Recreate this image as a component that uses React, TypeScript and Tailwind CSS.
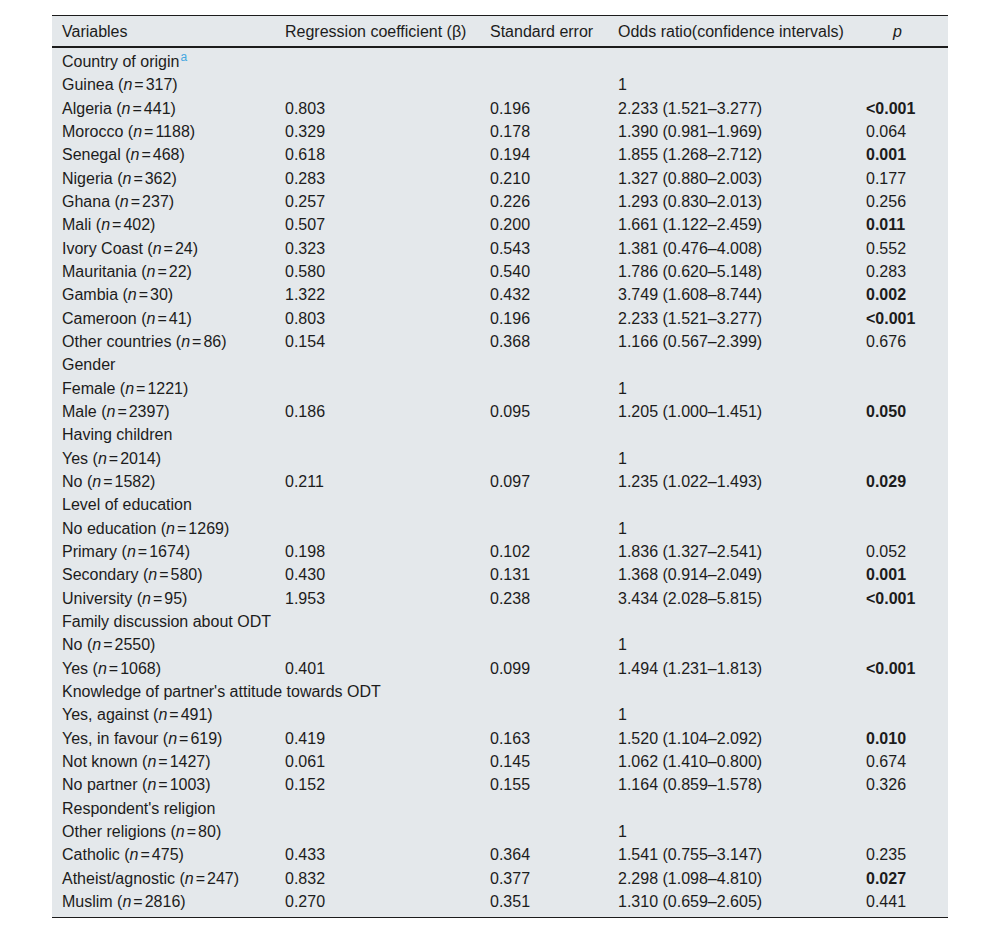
import React from "react";

type Row = {
  label: string;
  n?: string;
  sup?: string;
  coef?: string;
  se?: string;
  or?: string;
  p?: string;
  bold?: boolean;
};

const rows: Row[] = [
  { label: "Country of origin", sup: "a" },
  { label: "Guinea", n: "317", or: "1" },
  { label: "Algeria", n: "441", coef: "0.803", se: "0.196", or: "2.233 (1.521–3.277)", p: "<0.001", bold: true },
  { label: "Morocco", n: "1188", coef: "0.329", se: "0.178", or: "1.390 (0.981–1.969)", p: "0.064" },
  { label: "Senegal", n: "468", coef: "0.618", se: "0.194", or: "1.855 (1.268–2.712)", p: "0.001", bold: true },
  { label: "Nigeria", n: "362", coef: "0.283", se: "0.210", or: "1.327 (0.880–2.003)", p: "0.177" },
  { label: "Ghana", n: "237", coef: "0.257", se: "0.226", or: "1.293 (0.830–2.013)", p: "0.256" },
  { label: "Mali", n: "402", coef: "0.507", se: "0.200", or: "1.661 (1.122–2.459)", p: "0.011", bold: true },
  { label: "Ivory Coast", n: "24", coef: "0.323", se: "0.543", or: "1.381 (0.476–4.008)", p: "0.552" },
  { label: "Mauritania", n: "22", coef: "0.580", se: "0.540", or: "1.786 (0.620–5.148)", p: "0.283" },
  { label: "Gambia", n: "30", coef: "1.322", se: "0.432", or: "3.749 (1.608–8.744)", p: "0.002", bold: true },
  { label: "Cameroon", n: "41", coef: "0.803", se: "0.196", or: "2.233 (1.521–3.277)", p: "<0.001", bold: true },
  { label: "Other countries", n: "86", coef: "0.154", se: "0.368", or: "1.166 (0.567–2.399)", p: "0.676" },
  { label: "Gender" },
  { label: "Female", n: "1221", or: "1" },
  { label: "Male", n: "2397", coef: "0.186", se: "0.095", or: "1.205 (1.000–1.451)", p: "0.050", bold: true },
  { label: "Having children" },
  { label: "Yes", n: "2014", or: "1" },
  { label: "No", n: "1582", coef: "0.211", se: "0.097", or: "1.235 (1.022–1.493)", p: "0.029", bold: true },
  { label: "Level of education" },
  { label: "No education", n: "1269", or: "1" },
  { label: "Primary", n: "1674", coef: "0.198", se: "0.102", or: "1.836 (1.327–2.541)", p: "0.052" },
  { label: "Secondary", n: "580", coef: "0.430", se: "0.131", or: "1.368 (0.914–2.049)", p: "0.001", bold: true },
  { label: "University", n: "95", coef: "1.953", se: "0.238", or: "3.434 (2.028–5.815)", p: "<0.001", bold: true },
  { label: "Family discussion about ODT" },
  { label: "No", n: "2550", or: "1" },
  { label: "Yes", n: "1068", coef: "0.401", se: "0.099", or: "1.494 (1.231–1.813)", p: "<0.001", bold: true },
  { label: "Knowledge of partner's attitude towards ODT" },
  { label: "Yes, against", n: "491", or: "1" },
  { label: "Yes, in favour", n: "619", coef: "0.419", se: "0.163", or: "1.520 (1.104–2.092)", p: "0.010", bold: true },
  { label: "Not known", n: "1427", coef: "0.061", se: "0.145", or: "1.062 (1.410–0.800)", p: "0.674" },
  { label: "No partner", n: "1003", coef: "0.152", se: "0.155", or: "1.164 (0.859–1.578)", p: "0.326" },
  { label: "Respondent's religion" },
  { label: "Other religions", n: "80", or: "1" },
  { label: "Catholic", n: "475", coef: "0.433", se: "0.364", or: "1.541 (0.755–3.147)", p: "0.235" },
  { label: "Atheist/agnostic", n: "247", coef: "0.832", se: "0.377", or: "2.298 (1.098–4.810)", p: "0.027", bold: true },
  { label: "Muslim", n: "2816", coef: "0.270", se: "0.351", or: "1.310 (0.659–2.605)", p: "0.441" },
];

const grid = "grid grid-cols-[233px_205px_128px_238px_1fr]";

export default function App() {
  return (
    <div
      className="w-[1000px] min-h-[933px] bg-white pt-[15px] text-[16px] text-[#1c1c1c]"
      style={{ fontFamily: '"Liberation Sans", Arial, Helvetica, sans-serif' }}
    >
      <div className="ml-[52px] w-[896px] bg-[#e4e8eb] border-t border-b border-[#1c1c1c]">
        <div className={`${grid} h-[32px] items-center pt-[1px] border-b-2 border-[#1c1c1c]`}>
          <div className="pl-[10px] whitespace-nowrap">Variables</div>
          <div className="whitespace-nowrap">Regression coefficient (β)</div>
          <div className="whitespace-nowrap">Standard error</div>
          <div className="whitespace-nowrap">Odds ratio(confidence intervals)</div>
          <div className="pl-[37px] italic">p</div>
        </div>
        <div className="pt-[2.5px] pb-[3.5px]">
          {rows.map((r, i) => (
            <div key={i} className={`${grid} h-[23.33px] items-center leading-none`}>
              <div className="pl-[10px] whitespace-nowrap">
                {r.label}
                {r.sup && (
                  <span className="relative -top-[6px] ml-[1px] text-[12px] text-[#45a7e0]">{r.sup}</span>
                )}
                {r.n && (
                  <>
                    {" ("}
                    <i>n</i>
                    <span className="mx-[2px]">=</span>
                    {r.n})
                  </>
                )}
              </div>
              <div>{r.coef}</div>
              <div>{r.se}</div>
              <div className="whitespace-nowrap">{r.or}</div>
              <div className={`pl-[10px] ${r.bold ? "font-bold" : ""}`}>{r.p}</div>
            </div>
          ))}
        </div>
      </div>
    </div>
  );
}
